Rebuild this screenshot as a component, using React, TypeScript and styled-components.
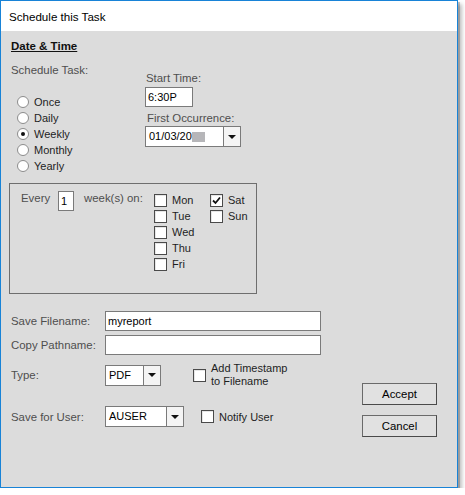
import React from "react";
import styled, { createGlobalStyle } from "styled-components";

const GlobalStyle = createGlobalStyle`
  html, body {
    margin: 0;
    padding: 0;
    background: #ffffff;
  }
  body {
    font-family: "Liberation Sans", Arial, sans-serif;
    font-size: 11px;
    color: #222;
  }
`;

const Window = styled.div`
  box-sizing: border-box;
  width: 458px;
  height: 488px;
  border: 1px solid #1883d7;
  display: flex;
  flex-direction: column;
  box-shadow: 2px 2px 0 rgba(0, 0, 0, 0.2), 4px 4px 4px rgba(0, 0, 0, 0.25);
`;

const TitleBar = styled.div`
  height: 30px;
  flex: none;
  background: #ffffff;
  display: flex;
  align-items: center;
  padding-left: 8px;
  font-family: "Liberation Sans", Arial, sans-serif;
  font-size: 11.6px;
  color: #000;
`;

const Body = styled.div`
  flex: 1;
  background: #dcdcdc;
  padding: 8px 20px 0 10px;
`;

const Heading = styled.div`
  font-weight: bold;
  font-size: 11.5px;
  text-decoration: underline;
  line-height: 14px;
  color: #111;
`;

const TopSection = styled.div`
  display: flex;
  margin-top: 10px;
`;

const LeftCol = styled.div`
  width: 134px;
`;

const FieldLabel = styled.div<{ $indent?: number }>`
  line-height: 14px;
  color: #4e4e4e;
  font-size: 11.4px;
  padding-left: ${(p) => p.$indent ?? 0}px;
`;

const RadioList = styled.div`
  margin-top: 17px;
  display: flex;
  flex-direction: column;
`;

const RadioRow = styled.div`
  height: 16px;
  display: flex;
  align-items: center;
  padding-left: 6px;
  gap: 5px;
  color: #1e1e1e;
`;

const Radio = styled.span<{ $checked?: boolean }>`
  box-sizing: border-box;
  width: 12px;
  height: 12px;
  border-radius: 50%;
  border: 1px solid #8c8c8c;
  background: #fff;
  display: flex;
  align-items: center;
  justify-content: center;

  &::after {
    content: "";
    width: 4px;
    height: 4px;
    border-radius: 50%;
    background: ${(p) => (p.$checked ? "#111" : "transparent")};
  }
`;

const RightCol = styled.div`
  padding-top: 8px;
  display: flex;
  flex-direction: column;
`;

const TextBox = styled.div<{ $width: number }>`
  box-sizing: border-box;
  width: ${(p) => p.$width}px;
  height: 20px;
  border: 1px solid #7a7a7a;
  background: #fff;
  padding: 0 2px;
  line-height: 18px;
  color: #000;
  white-space: nowrap;
  overflow: hidden;
`;

const Combo = styled.div<{ $width: number }>`
  box-sizing: border-box;
  width: ${(p) => p.$width}px;
  height: 21px;
  border: 1px solid #7a7a7a;
  background: #fff;
  display: flex;
  color: #000;
`;

const ComboText = styled.div`
  flex: 1;
  padding-left: 3px;
  line-height: 19px;
  display: flex;
  align-items: center;
  white-space: nowrap;
`;

const ComboButton = styled.div`
  width: 16px;
  border-left: 1px solid #7a7a7a;
  background: #f4f4f4;
  display: flex;
  align-items: center;
  justify-content: center;

  &::after {
    content: "";
    border-left: 4px solid transparent;
    border-right: 4px solid transparent;
    border-top: 4px solid #111;
  }
`;

const Redacted = styled.span`
  display: inline-block;
  width: 13px;
  height: 10px;
  background: #b6b6b9;
`;

const Group = styled.div`
  box-sizing: border-box;
  margin-top: 9px;
  margin-left: -2px;
  width: 248px;
  height: 111px;
  border: 1px solid #6e6e6e;
  padding: 7px 0 0 11px;
  display: flex;
  align-items: flex-start;
`;

const InlineLabel = styled.div<{ $width: number }>`
  width: ${(p) => p.$width}px;
  line-height: 14px;
  color: #4e4e4e;
  font-size: 11.4px;
  flex: none;
`;

const NumberBox = styled(TextBox)`
  margin-right: 10px;
  flex: none;
`;

const DayCol = styled.div<{ $width?: number }>`
  width: ${(p) => (p.$width ? `${p.$width}px` : "auto")};
  display: flex;
  flex-direction: column;
  padding-top: 1px;
`;

const CheckRow = styled.div<{ $height?: number }>`
  height: ${(p) => p.$height ?? 16}px;
  display: flex;
  align-items: center;
  gap: 5px;
  color: #1e1e1e;
`;

const Box = styled.span`
  box-sizing: border-box;
  width: 13px;
  height: 13px;
  flex: none;
  border: 1px solid #4a4a4a;
  background: #fff;
  box-shadow: inset 1px 1px 0 #e6e6e6;
  display: flex;
  align-items: center;
  justify-content: center;
`;

const TwoLine = styled.div`
  line-height: 13px;
`;

const Lower = styled.div`
  margin-top: 17px;
`;

const FormRow = styled.div`
  display: flex;
  align-items: center;
  height: 20px;
  margin-bottom: 4px;
`;

const RowLabel = styled.div`
  width: 94px;
  color: #4e4e4e;
  font-size: 11.4px;
  line-height: 14px;
  flex: none;
`;

const BottomArea = styled.div`
  display: flex;
  margin-top: 7px;
`;

const OptionsCol = styled.div`
  display: flex;
  flex-direction: column;
`;

const OptionRow = styled.div<{ $height: number; $gapTop?: number }>`
  display: flex;
  align-items: center;
  height: ${(p) => p.$height}px;
  margin-top: ${(p) => p.$gapTop ?? 0}px;
`;

const Aside = styled.div<{ $left: number }>`
  margin-left: ${(p) => p.$left}px;
`;

const ButtonCol = styled.div`
  margin-left: auto;
  padding-top: 21px;
  display: flex;
  flex-direction: column;
  gap: 10px;
`;

const Button = styled.button`
  box-sizing: border-box;
  width: 75px;
  height: 22px;
  border: 1px solid #6a6a6a;
  border-right-color: #4a4a4a;
  border-bottom-color: #4a4a4a;
  background: #e1e1e1;
  font-family: "Liberation Sans", Arial, sans-serif;
  font-size: 11.4px;
  color: #000;
  padding: 0;
`;

const CheckMark = () => (
  <svg width="9" height="9" viewBox="0 0 9 9">
    <polyline points="1,4.5 3.5,7 8,1.5" fill="none" stroke="#111" strokeWidth="1.8" />
  </svg>
);

const Check: React.FC<{ label: React.ReactNode; checked?: boolean; height?: number }> = ({
  label,
  checked,
  height,
}) => (
  <CheckRow $height={height}>
    <Box>{checked ? <CheckMark /> : null}</Box>
    {label}
  </CheckRow>
);

const frequencies = ["Once", "Daily", "Weekly", "Monthly", "Yearly"];

export default function App() {
  return (
    <>
      <GlobalStyle />
      <Window>
        <TitleBar>Schedule this Task</TitleBar>
        <Body>
          <Heading>Date &amp; Time</Heading>
          <TopSection>
            <LeftCol>
              <FieldLabel>Schedule Task:</FieldLabel>
              <RadioList>
                {frequencies.map((f) => (
                  <RadioRow key={f}>
                    <Radio $checked={f === "Weekly"} />
                    {f}
                  </RadioRow>
                ))}
              </RadioList>
            </LeftCol>
            <RightCol>
              <FieldLabel $indent={1}>Start Time:</FieldLabel>
              <div style={{ height: 2 }} />
              <TextBox $width={48}>6:30P</TextBox>
              <div style={{ height: 4 }} />
              <FieldLabel $indent={2}>First Occurrence:</FieldLabel>
              <div style={{ height: 1 }} />
              <Combo $width={96}>
                <ComboText>
                  01/03/20
                  <Redacted />
                </ComboText>
                <ComboButton />
              </Combo>
            </RightCol>
          </TopSection>

          <Group>
            <InlineLabel $width={37}>Every</InlineLabel>
            <NumberBox $width={16}>1</NumberBox>
            <InlineLabel $width={70}>week(s) on:</InlineLabel>
            <DayCol $width={56}>
              <Check label="Mon" />
              <Check label="Tue" />
              <Check label="Wed" />
              <Check label="Thu" />
              <Check label="Fri" />
            </DayCol>
            <DayCol>
              <Check label="Sat" checked />
              <Check label="Sun" />
            </DayCol>
          </Group>

          <Lower>
            <FormRow>
              <RowLabel>Save Filename:</RowLabel>
              <TextBox $width={216}>myreport</TextBox>
            </FormRow>
            <FormRow>
              <RowLabel>Copy Pathname:</RowLabel>
              <TextBox $width={216} />
            </FormRow>
            <BottomArea>
              <OptionsCol>
                <OptionRow $height={26}>
                  <RowLabel>Type:</RowLabel>
                  <Combo $width={56}>
                    <ComboText>PDF</ComboText>
                    <ComboButton />
                  </Combo>
                  <Aside $left={32}>
                    <Check
                      height={26}
                      label={
                        <TwoLine>
                          Add Timestamp
                          <br />
                          to Filename
                        </TwoLine>
                      }
                    />
                  </Aside>
                </OptionRow>
                <OptionRow $height={21} $gapTop={18}>
                  <RowLabel>Save for User:</RowLabel>
                  <Combo $width={79}>
                    <ComboText>AUSER</ComboText>
                    <ComboButton />
                  </Combo>
                  <Aside $left={17}>
                    <Check label="Notify User" />
                  </Aside>
                </OptionRow>
              </OptionsCol>
              <ButtonCol>
                <Button>Accept</Button>
                <Button>Cancel</Button>
              </ButtonCol>
            </BottomArea>
          </Lower>
        </Body>
      </Window>
    </>
  );
}
